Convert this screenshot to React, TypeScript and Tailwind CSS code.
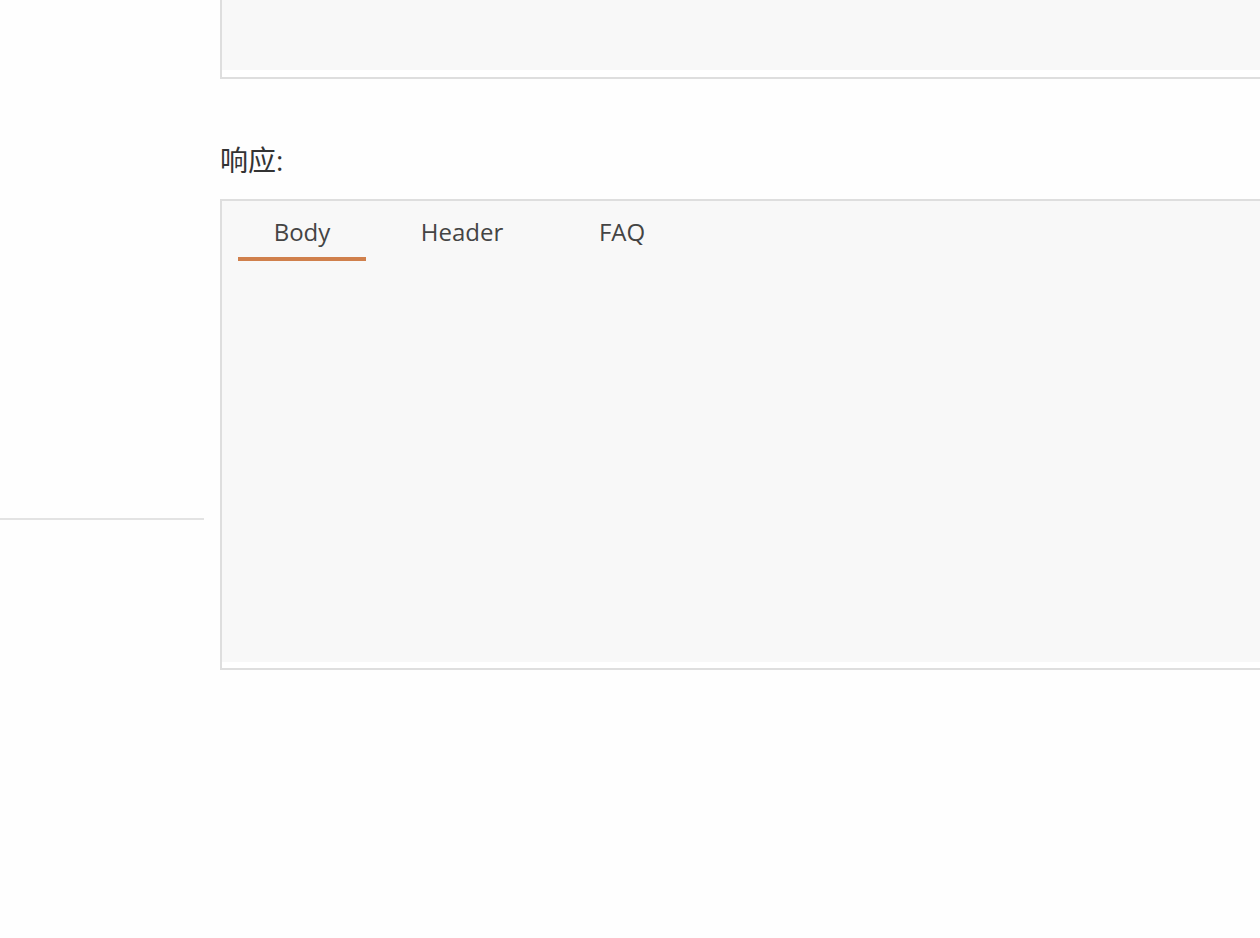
import React, { useState } from 'react';

const tabs = ['Body', 'Header', 'FAQ'];

export default function App() {
  const [active, setActive] = useState('Body');

  return (
    <div
      className="w-[1260px] h-[938px] overflow-hidden bg-[#fefefe] flex text-[#333333]"
      style={{ fontFamily: '"Open Sans", "Noto Sans CJK SC", sans-serif' }}
    >
      {/* sidebar */}
      <aside className="w-[204px] shrink-0 h-[520px] border-b-2 border-[#e3e3e3]" />

      <main className="ml-4 w-[1200px] shrink-0">
        {/* request box (scrolled, only bottom visible) */}
        <div className="h-[79px] border-x-2 border-b-2 border-[#dedede] bg-white">
          <div className="h-[70px] bg-[#f8f8f8]" />
        </div>

        <h3 className="mt-[65px] text-[28px] leading-8 text-[#333333]">响应:</h3>

        <div className="mt-[23px] border-2 border-[#dedede] bg-white">
          <div className="h-[461px] bg-[#f8f8f8] px-4 pt-[15px]">
            <div className="flex gap-8">
              {tabs.map(tab => (
                <button
                  key={tab}
                  onClick={() => setActive(tab)}
                  className={
                    'w-32 h-[45px] pb-[9px] leading-8 text-[24px] text-[#444444] text-center border-b-4 ' +
                    (active === tab ? 'border-[#d0804c]' : 'border-transparent')
                  }
                >
                  {tab}
                </button>
              ))}
            </div>
          </div>
          <div className="h-[6px]" />
        </div>
      </main>
    </div>
  );
}
